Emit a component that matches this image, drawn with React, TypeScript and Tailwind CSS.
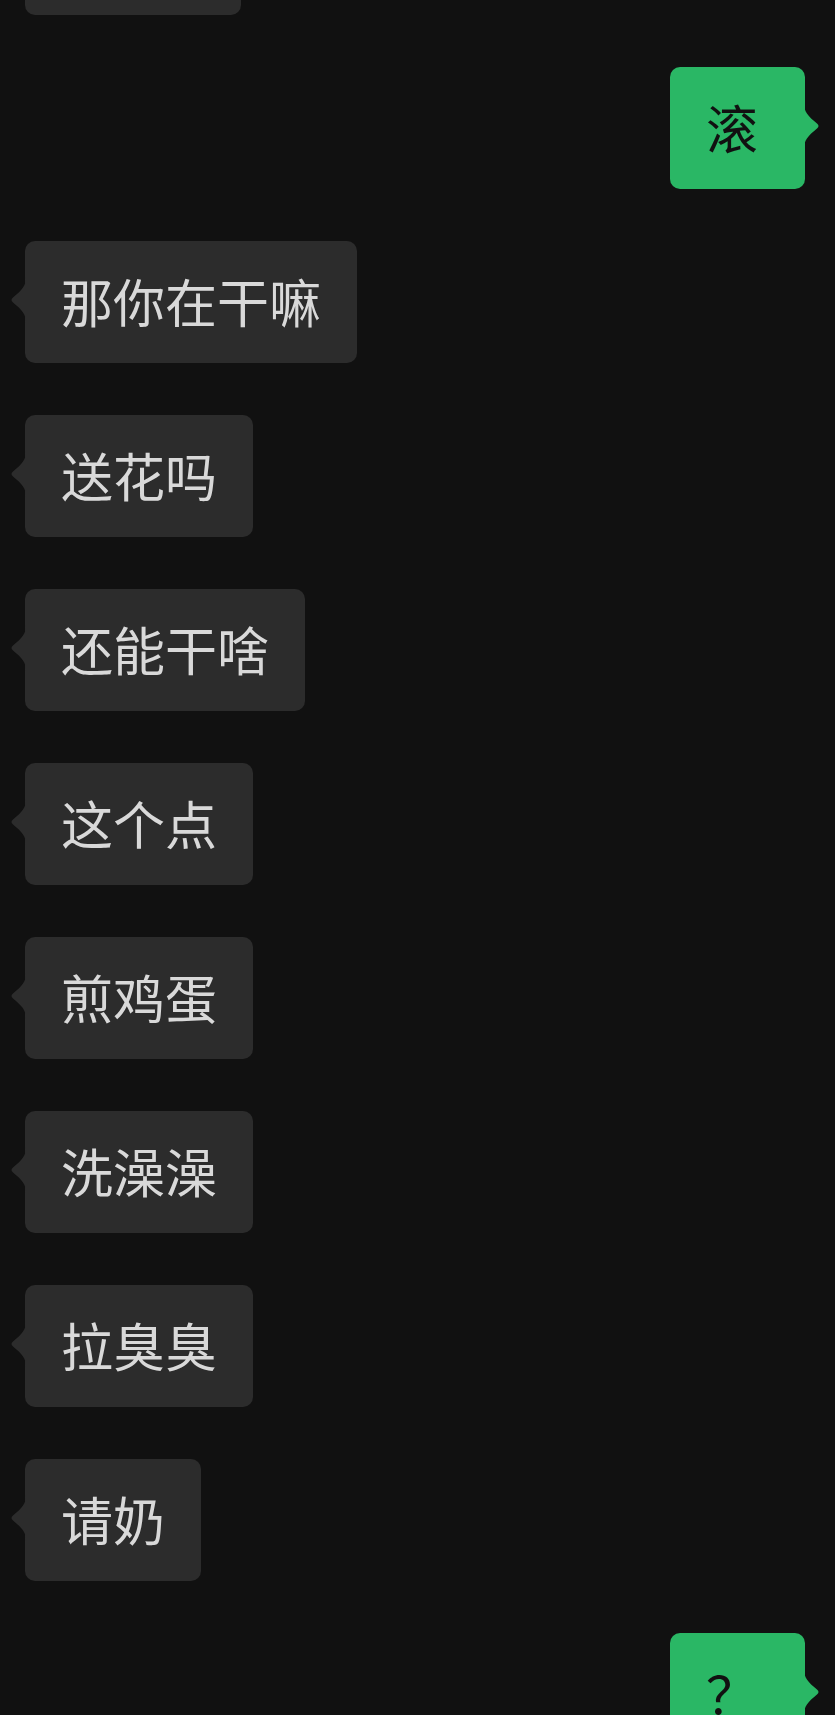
import React from 'react';

interface Msg {
  side: 'in' | 'out';
  text: string;
  w?: string;
}

const messages: Msg[] = [
  { side: 'in', text: '', w: 'w-[216px]' },
  { side: 'out', text: '滚' },
  { side: 'in', text: '那你在干嘛' },
  { side: 'in', text: '送花吗' },
  { side: 'in', text: '还能干啥' },
  { side: 'in', text: '这个点' },
  { side: 'in', text: '煎鸡蛋' },
  { side: 'in', text: '洗澡澡' },
  { side: 'in', text: '拉臭臭' },
  { side: 'in', text: '请奶' },
  { side: 'out', text: '？' },
];

const Tail: React.FC<{ side: 'in' | 'out' }> = ({ side }) => (
  <svg
    width="16"
    height="46"
    viewBox="0 0 16 46"
    className={`absolute top-[36px] ${side === 'in' ? '-left-[15px]' : '-right-[15px] -scale-x-100'}`}
  >
    <path
      d="M16 0 C16 9 12 13 3 20.5 Q0 23 3 25.5 C12 33 16 37 16 46 Z"
      fill={side === 'in' ? '#2c2c2c' : '#2ab765'}
    />
  </svg>
);

const Bubble: React.FC<{ msg: Msg }> = ({ msg }) => {
  const out = msg.side === 'out';
  return (
    <div className={`flex ${out ? 'justify-end pr-[30px]' : 'justify-start pl-[25px]'}`}>
      <div
        className={`relative h-[122px] rounded-[10px] px-[36px] py-[23px] text-[52px] leading-[74px] whitespace-nowrap ${
          out ? 'bg-[#2ab765] text-[#111111] min-w-[135px]' : 'bg-[#2c2c2c] text-[#d9d9d9]'
        } ${msg.w ?? ''}`}
      >
        <Tail side={msg.side} />
        {msg.text}
      </div>
    </div>
  );
};

const App: React.FC = () => {
  return (
    <div
      className="h-[1715px] w-full overflow-hidden bg-[#111111]"
      style={{ fontFamily: '"Noto Sans CJK SC", "Noto Sans", sans-serif' }}
    >
      <div className="-mt-[107px] flex flex-col gap-[52px]">
        {messages.map((m, i) => (
          <Bubble key={i} msg={m} />
        ))}
      </div>
    </div>
  );
};

export default App;
